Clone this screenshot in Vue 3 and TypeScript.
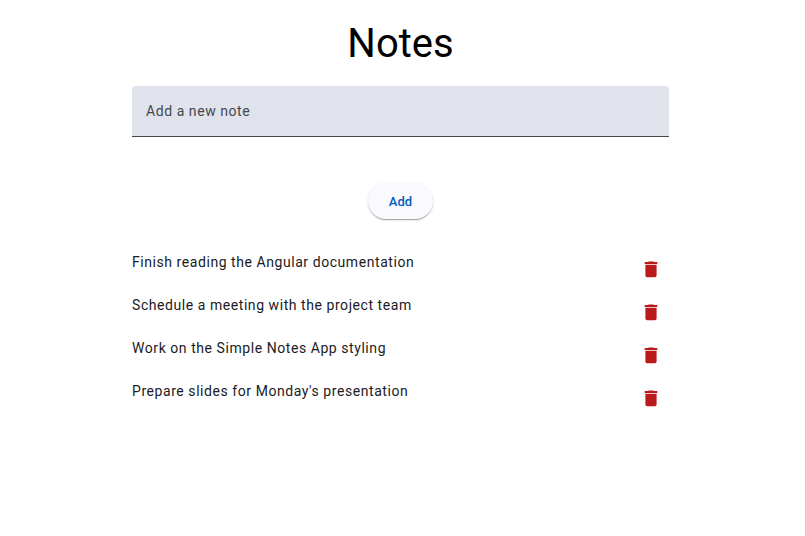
<script setup lang="ts">
import { ref } from 'vue'

interface Note {
  id: number
  text: string
}

const draft = ref('')
const notes = ref<Note[]>([
  { id: 1, text: 'Finish reading the Angular documentation' },
  { id: 2, text: 'Schedule a meeting with the project team' },
  { id: 3, text: 'Work on the Simple Notes App styling' },
  { id: 4, text: "Prepare slides for Monday's presentation" },
])

function addNote(): void {
  const text = draft.value.trim()
  if (!text) return
  notes.value.push({ id: Date.now(), text })
  draft.value = ''
}

function removeNote(id: number): void {
  notes.value = notes.value.filter((note) => note.id !== id)
}
</script>

<template>
  <main class="notes">
    <h1 class="title">Notes</h1>
    <form class="form" @submit.prevent="addNote">
      <input v-model="draft" class="field" type="text" placeholder="Add a new note" aria-label="Add a new note" />
      <button class="add" type="submit">Add</button>
    </form>
    <ul class="list">
      <li v-for="note in notes" :key="note.id" class="item">
        <span class="text">{{ note.text }}</span>
        <button class="remove" type="button" aria-label="Delete note" @click="removeNote(note.id)">
          <svg viewBox="0 0 22 22" width="22" height="22" fill="currentColor" aria-hidden="true">
            <path d="M4.700 3H8l.6-.6h4.800L14 3h3.300v2H4.700V3zM5.400 5.800h11.200v10.700a1.800 1.800 0 0 1-1.800 1.800H7.200a1.800 1.800 0 0 1-1.800-1.800V5.800z" />
          </svg>
        </button>
      </li>
    </ul>
  </main>
</template>

<style>
body {
  background: #fff;
}
</style>

<style scoped>
.notes {
  width: 67.2%;
  margin: 0 auto;
  padding: 18px 4px 0 0;
  box-sizing: border-box;
  font-family: Roboto, 'Liberation Sans', sans-serif;
}
.title {
  margin: 0 0 16px;
  font-size: 40px;
  line-height: 52px;
  font-weight: 400;
  text-align: center;
  color: #000;
}
.form {
  display: flex;
  flex-direction: column;
  align-items: center;
  gap: 46px;
}
.field {
  width: 100%;
  height: 51px;
  box-sizing: border-box;
  padding: 0 14px;
  border: 0;
  border-bottom: 1px solid #44474e;
  border-radius: 4px 4px 0 0;
  background: #e0e2ec;
  color: #1a1b1f;
  font: inherit;
  font-size: 14px;
  letter-spacing: 0.04em;
  outline: none;
}
.field::placeholder {
  color: #44474e;
  opacity: 1;
}
.add {
  height: 36px;
  padding: 0 21px;
  border: 0;
  border-radius: 18px;
  background: #faf9fd;
  color: #005cbb;
  font: inherit;
  font-size: 13px;
  font-weight: 500;
  box-shadow: 0 2px 1px -1px rgba(0, 0, 0, 0.2), 0 1px 1px rgba(0, 0, 0, 0.14), 0 1px 3px rgba(0, 0, 0, 0.12);
  cursor: pointer;
}
.list {
  margin: 33px 0 0;
  padding: 0;
  list-style: none;
}
.item {
  display: flex;
  justify-content: space-between;
  height: 43px;
}
.text {
  font-size: 14px;
  line-height: 20px;
  letter-spacing: 0.04em;
  color: #1a1b1f;
}
.remove {
  display: flex;
  align-items: center;
  justify-content: center;
  width: 36px;
  height: 36px;
  padding: 0;
  border: 0;
  background: transparent;
  color: #ba1a1a;
  cursor: pointer;
}
</style>
